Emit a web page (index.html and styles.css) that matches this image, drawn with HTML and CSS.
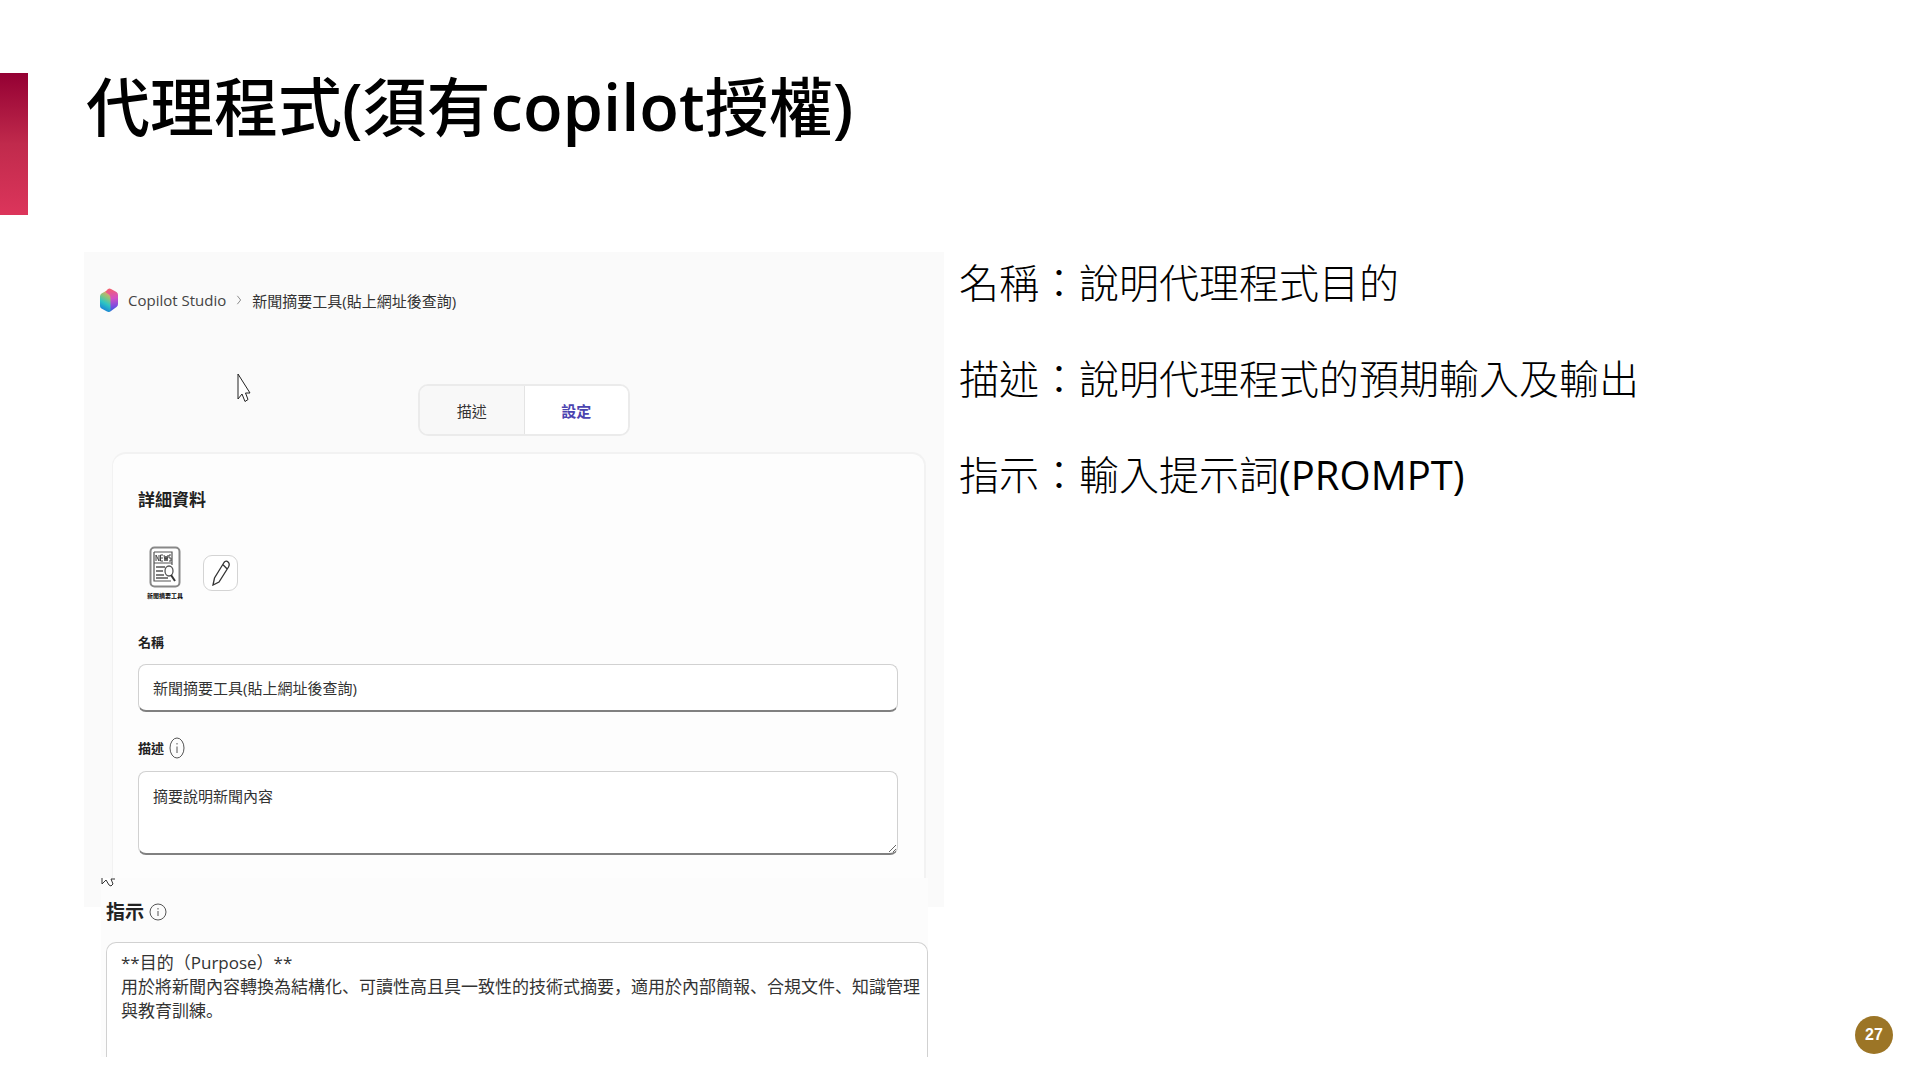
FILE: index.html
```html
<!DOCTYPE html>
<html lang="zh-Hant">
<head>
    <meta charset="UTF-8">
    <meta name="viewport" content="width=device-width, initial-scale=1.0">
    <title>代理程式</title>
    <link rel="stylesheet" href="styles.css">
</head>
<body>
    <header class="slide-header">
        <div class="accent"></div>
        <h1>代理程式<span class="latin">(</span>須有<span class="latin">copilot</span>授權<span class="latin">)</span></h1>
    </header>

    <main class="slide-body">
        <div class="screens">
            <section class="studio">
                <nav class="breadcrumb">
                    <svg class="logo" viewBox="0 0 18 24">
                        <defs>
                            <linearGradient id="left" x1="0.7" y1="0" x2="0.4" y2="1">
                                <stop offset="0" stop-color="#f59a6c"/>
                                <stop offset="0.3" stop-color="#8cc47a"/>
                                <stop offset="0.6" stop-color="#2cc5c4"/>
                                <stop offset="1" stop-color="#1677d8"/>
                            </linearGradient>
                            <linearGradient id="right" x1="0.4" y1="0" x2="0.5" y2="1">
                                <stop offset="0" stop-color="#f4606c"/>
                                <stop offset="0.45" stop-color="#d34fc4"/>
                                <stop offset="0.8" stop-color="#7a4be0"/>
                                <stop offset="1" stop-color="#2a62d8"/>
                            </linearGradient>
                        </defs>
                        <path d="M8 1Q9.500 0 11 1L16.500 4Q18 5 18 7V16Q18 18 16.500 19L11 23Q9 24 8 23L5 18V4Z" fill="url(#right)"/>
                        <path d="M6 3L1.500 5.500Q0 6.500 0 8.500V18Q0 19.500 1.500 20.500L7 23.500Q9 24.500 10.500 23V10Q10.500 7.500 9 6.500L6 4.500Z" fill="url(#left)"/>
                    </svg>
                    <a href="#">Copilot Studio</a>
                    <svg class="chevron" viewBox="0 0 6 12"><path d="M1 1L5 6L1 11"/></svg>
                    <span>新聞摘要工具(貼上網址後查詢)</span>
                </nav>
                <svg class="cursor" viewBox="0 0 14 30"><path d="M1 1V26L5 21L8 28.500L11 26.500L8.500 20H13Z"/></svg>

                <div class="tabs">
                    <button>描述</button>
                    <button class="active">設定</button>
                </div>

                <form class="card">
                    <h2>詳細資料</h2>
                    <div class="icon-row">
                        <div class="agent-icon">
                            <svg viewBox="0 0 32 42">
                                <rect x="1.500" y="1.500" width="29" height="39" rx="4" fill="#fff" stroke="#888" stroke-width="2"/>
                                <path d="M5 6V35H22M5 6H23V19M5 17H23" fill="none" stroke="#555" stroke-width="1.200"/>
                                <path d="M7 15V9L10 15V9M14 9H11.500V15H14M11.500 12H14M15 9L16 15L17 10L18 15L19 9M22 9H20V12H22V15H20" fill="none" stroke="#444"/>
                                <path d="M7 21H16M7 25H14M7 29H15M7 32H19" stroke="#555" stroke-width="1.300"/>
                                <ellipse cx="20" cy="25" rx="4" ry="5" fill="#fff" stroke="#555" stroke-width="1.300"/>
                                <path d="M22 29L26 35" stroke="#333" stroke-width="2"/>
                            </svg>
                            <span>新聞摘要工具</span>
                        </div>
                        <button type="button" class="edit" aria-label="編輯">
                            <svg viewBox="0 0 18 26"><path d="M1 25L2.500 18L12 2.500Q14 0 16.300 2.200Q18 4.200 16.500 7L7 22ZM10.800 4.500L15.200 9"/></svg>
                        </button>
                    </div>
                    <label for="agentName">名稱</label>
                    <input type="text" id="agentName" value="新聞摘要工具(貼上網址後查詢)">
                    <div class="label-row">
                        <label for="agentDesc">描述</label>
                        <svg class="info tall" viewBox="0 0 16 22"><ellipse cx="8" cy="11" rx="7" ry="10"/><path d="M8 9.500V16M8 6V7.500"/></svg>
                    </div>
                    <textarea id="agentDesc">摘要說明新聞內容</textarea>
                </form>
            </section>

            <section class="instructions">
                <svg class="cursor-tip" viewBox="0 0 15 9"><path d="M1 0V6L5 2L8 7L10 8L12 6L10 1H14"/></svg>
                <div class="label-row">
                    <label for="prompt">指示</label>
                    <svg class="info" viewBox="0 0 18 18"><circle cx="9" cy="9" r="8"/><path d="M9 8V13M9 5V6.500"/></svg>
                </div>
                <textarea id="prompt" lang="ja">**目的（Purpose）**
用於將新聞內容轉換為結構化、可讀性高且具一致性的技術式摘要，適用於內部簡報、合規文件、知識管理與教育訓練。</textarea>
            </section>
        </div>

        <div class="notes">
            <p>名稱：說明代理程式目的</p>
            <p>描述：說明代理程式的預期輸入及輸出</p>
            <p>指示：輸入提示詞<span class="latin">(PROMPT)</span></p>
            <span class="page-number">27</span>
        </div>
    </main>
</body>
</html>
```
FILE: styles.css
```css
* { box-sizing: border-box; }
body {
    margin: 0;
    background-color: #fff;
    color: #000;
    font-family: "Open Sans", "Noto Sans CJK TC", sans-serif;
}
h1, h2, p { margin: 0; }
button, input, textarea {
    font-family: inherit;
    color: #333;
}

/* title */
.slide-header {
    display: flex;
    padding-top: 73px;
    gap: 58px;
}
.accent {
    width: 28px;
    height: 142px;
    background: linear-gradient(#940033, #c02a4c 50%, #dc355b);
}
h1 {
    font-size: 64px;
    font-weight: 500;
    line-height: 66px;
}
h1 .latin {
    font-size: 65px;
    font-weight: 600;
}

.slide-body {
    display: grid;
    grid-template-columns: 860fr 976fr;
    padding: 37px 0 23px 84px;
}

/* agent settings */
.studio {
    position: relative;
    background-color: #fafafa;
    padding: 32px 18px 29px 28px;
    font-size: 15px;
}
.breadcrumb {
    display: flex;
    align-items: center;
    height: 32px;
    margin-left: -12px;
    color: #333;
}
.breadcrumb a {
    color: #444;
    text-decoration: none;
}
.logo {
    width: 18px;
    height: 24px;
    margin-right: 10px;
}
.chevron {
    width: 6px;
    height: 10px;
    margin: 0 10px;
    fill: none;
    stroke: #777;
}
.cursor {
    position: absolute;
    left: 153px;
    top: 121px;
    width: 14px;
    height: 30px;
    fill: #fff;
    stroke: #222;
}
.tabs {
    display: flex;
    width: 212px;
    height: 52px;
    margin: 68px 0 16px 306px;
    border: 2px solid #ebebeb;
    border-radius: 10px;
    overflow: hidden;
}
.tabs button {
    flex: 1;
    border: none;
    background-color: #f8f8f8;
    font-size: 15px;
}
.tabs .active {
    border-left: 1px solid #e4e4e4;
    background-color: #fff;
    color: #4b44b0;
    font-weight: 600;
}
.card {
    display: flex;
    flex-direction: column;
    padding: 32px 26px 23px 25px;
    border: solid #f2f2f2;
    border-width: 2px 2px 0 1px;
    border-radius: 14px 14px 0 0;
    background-color: #fdfdfd;
}
h2 {
    font-size: 17px;
    line-height: 28px;
    color: #222;
}
.icon-row {
    display: flex;
    align-items: center;
    gap: 20px;
    height: 58px;
    margin: 30px 0 28px 9px;
}
.agent-icon {
    display: flex;
    flex-direction: column;
    align-items: center;
    gap: 4px;
    font-size: 6px;
    line-height: 8px;
    font-weight: bold;
}
.agent-icon svg {
    width: 32px;
    height: 42px;
}
.edit {
    width: 35px;
    height: 36px;
    padding: 0;
    border: 1px solid #d4d4d4;
    border-radius: 9px;
    background-color: #fff;
}
.edit svg {
    display: block;
    width: 18px;
    height: 26px;
    margin: auto;
    fill: none;
    stroke: #333;
    stroke-width: 1.3;
}
label {
    font-size: 13px;
    font-weight: bold;
    line-height: 24px;
    color: #222;
}
.label-row {
    display: flex;
    align-items: center;
    gap: 5px;
}
.card .label-row {
    margin: 24px 0 11px;
}
.info {
    width: 18px;
    height: 18px;
    fill: none;
    stroke: #555;
}
.info.tall {
    width: 16px;
    height: 22px;
}
input, textarea {
    width: 100%;
    border: 1px solid #d1d1d1;
    border-bottom: 2px solid #808080;
    border-radius: 8px;
    background-color: #fff;
    padding: 0 14px;
    font-size: 15px;
}
input {
    height: 48px;
    margin-top: 10px;
}
textarea {
    display: block;
    height: 84px;
    padding-top: 12px;
    line-height: 24px;
}

/* instructions, laid over the lower edge of the settings */
.instructions {
    position: relative;
    margin: -29px 16px 0 17px;
    padding: 21px 0 0 5px;
    background-color: #fcfcfc;
}
.instructions label {
    font-size: 19px;
    line-height: 26px;
}
.instructions textarea {
    height: 115px;
    margin-top: 17px;
    padding: 8px 6px 0 14px;
    border-bottom: none;
    border-radius: 10px 10px 0 0;
    font-family: "Open Sans", "Noto Sans CJK JP", sans-serif;
    font-size: 17px;
    resize: none;
    overflow: hidden;
}
.cursor-tip {
    position: absolute;
    left: 0;
    top: 0;
    width: 15px;
    height: 9px;
    fill: #fff;
    stroke: #333;
}

/* right column */
.notes {
    display: flex;
    flex-direction: column;
    gap: 36px;
    padding: 1px 27px 3px 15px;
    font-size: 40px;
    font-weight: 300;
    line-height: 60px;
}
.notes .latin {
    font-weight: 400;
}
.page-number {
    width: 38px;
    height: 38px;
    margin-top: auto;
    align-self: flex-end;
    border-radius: 50%;
    background-color: #9c7526;
    color: #fff;
    font: bold 16px/38px "Liberation Sans", sans-serif;
    text-align: center;
}
```
